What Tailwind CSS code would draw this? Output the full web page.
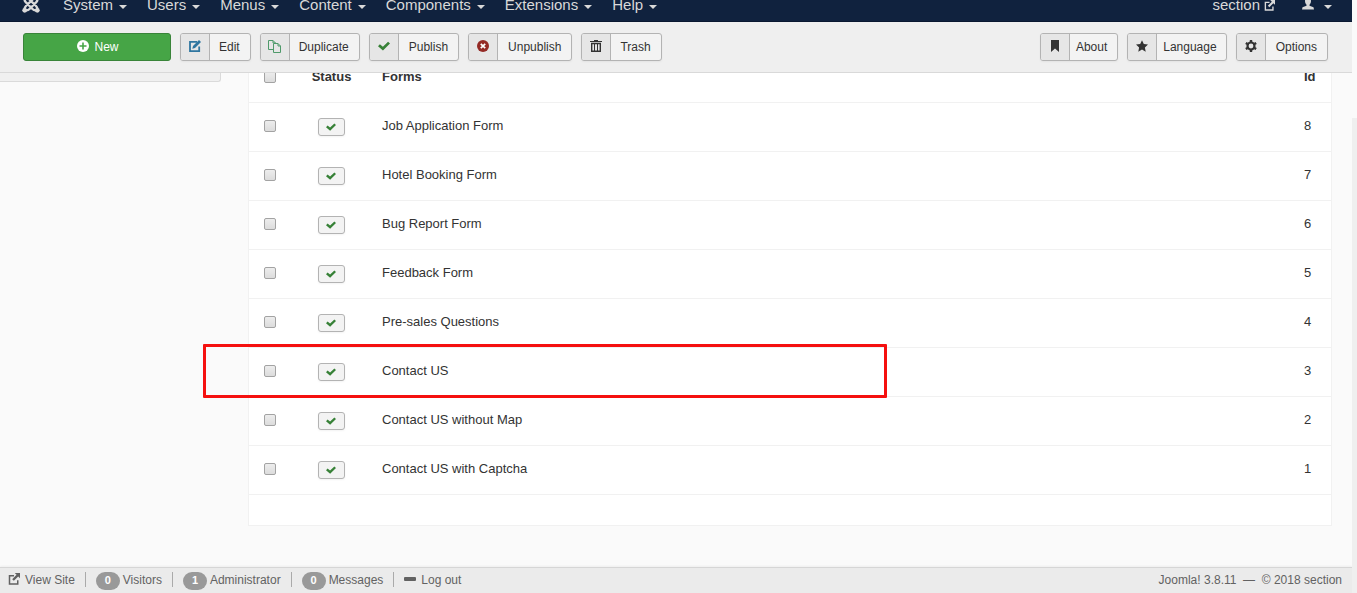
<!DOCTYPE html>
<html lang="en">
<head>
<meta charset="utf-8">
<title>Forms</title>
<script src="https://cdn.jsdelivr.net/npm/@tailwindcss/browser@4"></script>
</head>
<body class="bg-[#fafafa] font-['Liberation_Sans',Arial,sans-serif] text-[13px] text-[#333]">
<svg class="hidden">
  <symbol id="check" viewBox="0 0 16 16"><path d="M13.4 2.2 16 4.8 6.6 14 0 8.2l2.5-2.7 4 3.4z"/></symbol>
  <symbol id="out" viewBox="0 0 16 16"><path d="M1 2.5h7v2H3v9h9V9.5h2v6H1zM9 0h7v7l-2.4-2.4-5.8 5.8-2.2-2.2 5.8-5.8z"/></symbol>
  <symbol id="caret" viewBox="0 0 8 4"><path d="M0 0h8L4 4z"/></symbol>
</svg>
<div class="flex min-h-screen overflow-hidden">
  <div class="flex min-w-0 flex-1 flex-col">
    <header class="relative z-20 -mt-2 flex h-[30px] items-start border-b border-[#0a1830] bg-[#10223e] pt-[3px] pr-5 pl-[22px] text-[15px] leading-5 text-[#d9d9d9]">
      <a href="#" aria-label="Joomla" class="mr-[23px]">
        <svg class="h-[18px] w-[18px]" viewBox="0 0 18 18" fill="none" stroke="#d9d9d9" stroke-width="2.400"><path d="M3 3c2-1 3 0 4 1l7 7c1.500 1.500 1.500 3 1 4M15 3c-2-1-3 0-4 1l-7 7c-1.500 1.500-1.500 3-1 4M3 3c-1 2 0 3.500 1 4.500l6.500 6.500c1.500 1.500 3 1.500 4.500 1M15 3c1 2 0 3.500-1 4.500L7.500 14c-1.500 1.500-3 1.500-4.500 1"/><g fill="#d9d9d9" stroke="none"><circle cx="2.700" cy="2.700" r="2.400"/><circle cx="15.300" cy="2.700" r="2.400"/><circle cx="2.700" cy="15.300" r="2.400"/><circle cx="15.300" cy="15.300" r="2.400"/></g></svg>
      </a>
      <nav class="flex gap-5">
        <a href="#" class="flex items-center gap-1.5">System<svg class="mt-[3px] h-1 w-2 fill-current"><use href="#caret"/></svg></a>
        <a href="#" class="flex items-center gap-1.5">Users<svg class="mt-[3px] h-1 w-2 fill-current"><use href="#caret"/></svg></a>
        <a href="#" class="flex items-center gap-1.5">Menus<svg class="mt-[3px] h-1 w-2 fill-current"><use href="#caret"/></svg></a>
        <a href="#" class="flex items-center gap-1.5">Content<svg class="mt-[3px] h-1 w-2 fill-current"><use href="#caret"/></svg></a>
        <a href="#" class="flex items-center gap-1.5">Components<svg class="mt-[3px] h-1 w-2 fill-current"><use href="#caret"/></svg></a>
        <a href="#" class="flex items-center gap-1.5">Extensions<svg class="mt-[3px] h-1 w-2 fill-current"><use href="#caret"/></svg></a>
        <a href="#" class="flex items-center gap-1.5">Help<svg class="mt-[3px] h-1 w-2 fill-current"><use href="#caret"/></svg></a>
      </nav>
      <div class="ml-auto flex gap-[27px]">
        <a href="#" class="flex items-center gap-1">section<svg class="h-[11px] w-[11px] fill-current"><use href="#out"/></svg></a>
        <a href="#" aria-label="User menu" class="flex items-center gap-2.5"><svg class="mb-[2px] h-3 w-3 fill-current" viewBox="0 0 12 12"><path d="M6 0c2 0 3 1 3 3 0 1.800-.8 3-1.500 3.800v1l4 1.500.5 2.200H0l.5-2.200 4-1.500v-1C3.800 6 3 4.800 3 3c0-2 1-3 3-3z"/></svg><svg class="mt-[3px] h-1 w-2 fill-current"><use href="#caret"/></svg></a>
      </div>
    </header>

    <div class="relative z-10 flex h-[51px] items-start gap-[9px] border-b border-[#d9d9d9] bg-[#efefef] pt-[11px] pr-6 pl-[23px] text-xs">
      <button class="flex h-7 w-[148px] items-center justify-center gap-[5px] rounded-[3px] border border-[#398439] bg-[#46a546] pl-[2px] text-white">
        <svg class="mb-[2px] h-3 w-3" viewBox="0 0 12 12"><circle cx="6" cy="6" r="6" fill="#fff"/><path d="M6 2.500v7M2.500 6h7" stroke="#46a546" stroke-width="1.600"/></svg>New</button>
      <button class="flex h-7 overflow-hidden rounded-[3px] border border-[#b3b3b3] bg-[#f3f3f3] leading-[26px] shadow-xs">
        <span class="flex h-full w-[29px] items-center justify-center border-r border-[#b3b3b3] bg-[#e6e6e6]"><svg class="mb-[2px] h-3 w-3" viewBox="0 0 12 12"><path d="M8 1.800H1v9.400h9.200V6.500" fill="none" stroke="#2f76a0" stroke-width="1.800"/><path d="M10 0l2 2-6 6-2.700.8L4 6z" fill="#2f76a0"/></svg></span><span class="pr-2.5 pl-[9px]">Edit</span></button>
      <button class="flex h-7 overflow-hidden rounded-[3px] border border-[#b3b3b3] bg-[#f3f3f3] leading-[26px] shadow-xs">
        <span class="flex h-full w-[29px] items-center justify-center border-r border-[#b3b3b3] bg-[#e6e6e6]"><svg class="mb-[2px] h-[13px] w-[13px]" viewBox="0 0 13 13" fill="#e6e6e6" stroke="#4f9a6a"><path d="M.5.500H5L7.500 3v6.500h-7zM5 .5V3h2.500"/><path d="M5.500 3.500H10L12.500 6v6.500h-7zM10 3.500V6h2.500"/></svg></span><span class="pr-2.5 pl-[9px]">Duplicate</span></button>
      <button class="flex h-7 overflow-hidden rounded-[3px] border border-[#b3b3b3] bg-[#f3f3f3] leading-[26px] shadow-xs">
        <span class="flex h-full w-[29px] items-center justify-center border-r border-[#b3b3b3] bg-[#e6e6e6]"><svg class="mb-[2px] h-3 w-3 fill-[#378137]"><use href="#check"/></svg></span><span class="px-2.5">Publish</span></button>
      <button class="flex h-7 overflow-hidden rounded-[3px] border border-[#b3b3b3] bg-[#f3f3f3] leading-[26px] shadow-xs">
        <span class="flex h-full w-[29px] items-center justify-center border-r border-[#b3b3b3] bg-[#e6e6e6]"><svg class="mb-[2px] h-3 w-3" viewBox="0 0 12 12"><circle cx="6" cy="6" r="6" fill="#942a25"/><path d="m3.800 3.800 4.400 4.400m0-4.400L3.800 8.200" stroke="#fff" stroke-width="1.700"/></svg></span><span class="px-2.5">Unpublish</span></button>
      <button class="flex h-7 overflow-hidden rounded-[3px] border border-[#b3b3b3] bg-[#f3f3f3] leading-[26px] shadow-xs">
        <span class="flex h-full w-[29px] items-center justify-center border-r border-[#b3b3b3] bg-[#e6e6e6]"><svg class="mb-[2px] h-3 w-3" viewBox="0 0 12 12" fill="none" stroke="#333"><path d="M0 1.500h12M4 .5h4" stroke-width="1.200"/><path d="M1.700 3.500h8.600v7.800H1.700z" stroke-width="1.400"/><path d="M4.500 4v7M7.500 4v7"/></svg></span><span class="pr-2.5 pl-[9px]">Trash</span></button>
      <button class="ml-auto flex h-7 overflow-hidden rounded-[3px] border border-[#b3b3b3] bg-[#f3f3f3] leading-[26px] shadow-xs">
        <span class="flex h-full w-[29px] items-center justify-center border-r border-[#b3b3b3] bg-[#e6e6e6]"><svg class="mb-[2px] h-3 w-2 fill-[#333]" viewBox="0 0 8 12"><path d="M0 0h8v12L4 8.500 0 12z"/></svg></span><span class="pr-2.5 pl-1.5">About</span></button>
      <button class="flex h-7 overflow-hidden rounded-[3px] border border-[#b3b3b3] bg-[#f3f3f3] leading-[26px] shadow-xs">
        <span class="flex h-full w-[29px] items-center justify-center border-r border-[#b3b3b3] bg-[#e6e6e6]"><svg class="mb-[2px] h-3 w-3 fill-[#333]" viewBox="0 0 12 12"><path d="m6 .2 1.800 3.900 4.200.5-3.100 2.900.8 4.200L6 9.600l-3.700 2.100.8-4.200L0 4.600l4.200-.5z"/></svg></span><span class="pr-[9px] pl-1.5">Language</span></button>
      <button class="flex h-7 overflow-hidden rounded-[3px] border border-[#b3b3b3] bg-[#f3f3f3] leading-[26px] shadow-xs">
        <span class="flex h-full w-[29px] items-center justify-center border-r border-[#b3b3b3] bg-[#e6e6e6]"><svg class="mb-[2px] h-3 w-3" viewBox="0 0 12 12" fill="none" stroke="#333"><circle cx="6" cy="6" r="3.500" stroke-width="2.200"/><path d="M6 0v2M6 10v2M.8 3l1.800 1M9.400 8l1.800 1M.8 9l1.800-1M9.400 4l1.800-1" stroke-width="2.400"/></svg></span><span class="px-2.5">Options</span></button>
    </div>

    <main class="relative flex flex-1 items-start pr-5">
      <aside class="h-[9px] w-[221px] shrink-0 rounded-br-[3px] border-r border-b border-[#dadada] bg-[#f0f0f0]"></aside>
      <div class="-mt-5 ml-[27px] flex-1 border border-t-0 border-[#f1f1f1] bg-white">
        <table class="w-full table-fixed border-collapse text-left leading-[18px]">
          <thead>
            <tr class="h-[49px]">
              <th class="w-[45px] pl-[15px]"><input type="checkbox" aria-label="Select all" class="block h-3 w-3 appearance-none rounded-[2px] border border-[#a3a3a3] bg-linear-to-b from-[#ededed] to-[#dcdcdc]"></th>
              <th class="w-[75px] text-center font-bold">Status</th>
              <th class="pl-[13px] font-bold">Forms</th>
              <th class="w-[41px] pl-3.5 font-bold">Id</th>
            </tr>
          </thead>
          <tbody id="rows"></tbody>
        </table>
        <div class="h-[31px] border-t border-[#f1f1f1]"></div>
      </div>
      <div class="pointer-events-none absolute top-[271px] left-[203px] h-[54px] w-[684px] rounded-[1px] border-3 border-[#f5100f]"></div>
    </main>

    <footer class="flex h-[26px] items-center border-t border-[#d6d6d6] bg-[#ebebeb] pr-2.5 pb-[2px] pl-2 text-xs leading-[18px] text-[#626262] shadow-[0_-1px_2px_rgba(0,0,0,0.05)]">
      <a href="#" class="flex items-center gap-[5px]"><svg class="mb-[2px] h-3 w-3 fill-current"><use href="#out"/></svg>View Site</a>
      <span class="mx-2.5 h-[15px] w-px bg-[#aaa]"></span>
      <span class="flex items-center gap-[3px]"><b class="mt-[2px] h-[18px] w-6 rounded-full bg-[#999] text-center text-[11px] leading-[17px] text-white">0</b>Visitors</span>
      <span class="mx-2.5 h-[15px] w-px bg-[#aaa]"></span>
      <span class="flex items-center gap-[3px]"><b class="mt-[2px] h-[18px] w-6 rounded-full bg-[#999] text-center text-[11px] leading-[17px] text-white">1</b>Administrator</span>
      <span class="mx-2.5 h-[15px] w-px bg-[#aaa]"></span>
      <span class="flex items-center gap-[3px]"><b class="mt-[2px] h-[18px] w-6 rounded-full bg-[#999] text-center text-[11px] leading-[17px] text-white">0</b>Messages</span>
      <span class="mx-2.5 h-[15px] w-px bg-[#aaa]"></span>
      <a href="#" class="flex items-center gap-[5px]"><i class="mb-[2px] h-1 w-3 rounded-[1px] bg-[#626262]"></i>Log out</a>
      <span class="ml-auto">Joomla! 3.8.11 &nbsp;—&nbsp; © 2018 section</span>
    </footer>
  </div>
  <div class="w-[5px] bg-[#efefef]"><div class="h-[118px] bg-[#fafafa]"></div></div>
</div>
<script>
const forms = ["Job Application Form", "Hotel Booking Form", "Bug Report Form", "Feedback Form", "Pre-sales Questions", "Contact US", "Contact US without Map", "Contact US with Captcha"];
document.getElementById("rows").innerHTML = forms.map((name, i) => `
  <tr class="h-[49px] border-t border-[#f1f1f1]">
    <td class="pb-[2px] pl-[15px]"><input type="checkbox" aria-label="${name}" class="block h-3 w-3 appearance-none rounded-[2px] border border-[#a3a3a3] bg-linear-to-b from-[#ededed] to-[#dcdcdc]"></td>
    <td><button aria-label="Published" class="mx-auto flex h-[18px] w-[27px] items-center justify-center rounded-[3px] border border-[#b3b3b3] bg-[#f3f3f3] shadow-xs"><svg class="mr-[2px] h-2.5 w-2.5 fill-[#378137]"><use href="#check"/></svg></button></td>
    <td class="pb-[2px] pl-[13px]">${name}</td>
    <td class="pb-[2px] pl-3.5">${forms.length - i}</td>
  </tr>`).join("");
</script>
</body>
</html>
